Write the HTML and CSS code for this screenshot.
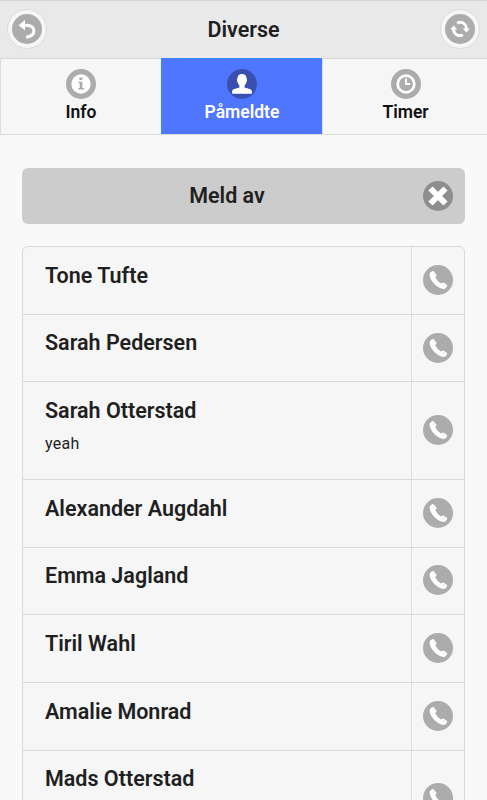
FILE: index.html
```
<!DOCTYPE html>
<html lang="no">
<head>
    <meta charset="UTF-8">
    <meta name="viewport" content="width=device-width, initial-scale=1.0">
    <title>Diverse</title>
    <link rel="stylesheet" href="styles.css">
</head>
<body>
    <svg class="sprite" width="0" height="0">
        <symbol id="phone" viewBox="0 0 30 30">
            <circle cx="15" cy="15" r="15" fill="#acacac"/>
            <path fill="#fff" d="M6.6 9.4Q6.8 8 8 7L9.2 6.2Q10.2 5.6 11 6.6L13.4 9.4Q13.9 10.4 13 11.1L12.2 12.1Q13.8 16 18 18.6L19.4 17.8Q20.2 17.3 21 17.8L23.8 19.8Q24.6 20.4 24 21.4L22.8 23Q21.6 24.3 19.6 23.8Q14 22.2 10 17.4Q6.6 13 6.6 9.4Z"/>
            <path stroke="#acacac" stroke-width="0.4" d="M9.8 9.8L12.4 7.6M19.9 21.2L22.2 18.2"/>
        </symbol>
    </svg>

    <header class="header">
        <a class="round-button">
            <svg width="30" height="30" viewBox="0 0 30 30">
                <circle cx="15" cy="15" r="15" fill="#acacac"/>
                <path fill="#fff" d="M6.6 11.2L13 6V16.2Z"/>
                <path fill="none" stroke="#fff" stroke-width="3" d="M12 11.2Q21.9 10.8 21.9 17Q21.9 22.2 14.2 23.2"/>
            </svg>
        </a>
        <h1>Diverse</h1>
        <a class="round-button">
            <svg width="30" height="30" viewBox="0 0 30 30">
                <circle cx="15" cy="15" r="15" fill="#acacac"/>
                <path fill="none" stroke="#fff" stroke-width="3" d="M12.2 9.4Q14 8 16.4 8.4A6.6 6.6 0 0 1 21.4 15M17.8 20.6Q16 22 13.6 21.6A6.6 6.6 0 0 1 8.6 15"/>
                <path fill="#fff" d="M17.6 14.6H24.8L21.4 18.6ZM5.2 15.4H12.4L8.6 11.4Z"/>
            </svg>
        </a>
    </header>

    <nav class="tabs">
        <a class="tab">
            <svg width="30" height="30" viewBox="0 0 30 30">
                <circle cx="15" cy="15" r="15" fill="#acacac"/>
                <circle cx="15" cy="15" r="9.7" fill="#fff"/>
                <path fill="#acacac" d="M13.4 8.6H16.4V11H13.4ZM12.3 12.7H16.4V19H18V20.4H12.3V19H13.7V14.1H12.3Z"/>
            </svg>
            Info
        </a>
        <a class="tab active">
            <svg width="30" height="30" viewBox="0 0 30 30">
                <circle cx="15" cy="15" r="15" fill="#3a50b1"/>
                <path fill="#fff" d="M15 5C18 5 19.7 7 19.7 9.9Q20.6 10.5 19.5 13Q18.9 15.5 17.6 16.6V18.4C18.4 19.5 24.9 19 24.9 22.4V24.7H5.1V22.4C5.1 19 11.6 19.5 12.4 18.4V16.6Q11.1 15.5 10.5 13Q9.4 10.5 10.3 9.9C10.3 7 12 5 15 5Z"/>
            </svg>
            Påmeldte
        </a>
        <a class="tab">
            <svg width="30" height="30" viewBox="0 0 30 30">
                <circle cx="15" cy="15" r="15" fill="#acacac"/>
                <circle cx="15" cy="15" r="8.3" fill="none" stroke="#fff" stroke-width="2.7"/>
                <path fill="none" stroke="#fff" stroke-width="2" d="M15 9.5V15H19.2"/>
            </svg>
            Timer
        </a>
    </nav>

    <main>
        <button class="unregister">
            <span>Meld av</span>
            <svg width="30" height="30" viewBox="0 0 30 30">
                <circle cx="15" cy="15" r="15" fill="#8e8e8e"/>
                <path stroke="#fff" stroke-width="6" d="M7.5 7.5L22.5 22.5M22.5 7.5L7.5 22.5"/>
            </svg>
        </button>

        <ul class="people">
            <li><div class="person"><h2>Tone Tufte</h2></div><a class="call"><svg width="30" height="30"><use href="#phone"/></svg></a></li>
            <li><div class="person"><h2>Sarah Pedersen</h2></div><a class="call"><svg width="30" height="30"><use href="#phone"/></svg></a></li>
            <li class="tall"><div class="person"><h2>Sarah Otterstad</h2><p>yeah</p></div><a class="call"><svg width="30" height="30"><use href="#phone"/></svg></a></li>
            <li><div class="person"><h2>Alexander Augdahl</h2></div><a class="call"><svg width="30" height="30"><use href="#phone"/></svg></a></li>
            <li><div class="person"><h2>Emma Jagland</h2></div><a class="call"><svg width="30" height="30"><use href="#phone"/></svg></a></li>
            <li><div class="person"><h2>Tiril Wahl</h2></div><a class="call"><svg width="30" height="30"><use href="#phone"/></svg></a></li>
            <li><div class="person"><h2>Amalie Monrad</h2></div><a class="call"><svg width="30" height="30"><use href="#phone"/></svg></a></li>
            <li class="tall"><div class="person"><h2>Mads Otterstad</h2></div><a class="call"><svg width="30" height="30"><use href="#phone"/></svg></a></li>
        </ul>
    </main>
</body>
</html>
```
FILE: styles.css
```
* {
    box-sizing: border-box;
}
body {
    margin: 0;
    height: 800px;
    overflow: hidden;
    background: #f9f9f9;
    color: #1f1f1f;
    font-family: Roboto, sans-serif;
}
.sprite {
    display: block;
}
svg {
    display: block;
    flex: none;
}
h1, h2, p {
    margin: 0;
}
.header {
    display: flex;
    align-items: center;
    justify-content: space-between;
    height: 58px;
    padding: 0 7px 2px;
    background: #e9e9e9;
    border-top: 1px solid #d6d6d6;
}
.header h1 {
    padding-top: 3px;
    font-size: 21.5px;
    font-weight: 600;
    line-height: 28px;
}
.round-button {
    display: flex;
    align-items: center;
    justify-content: center;
    width: 40px;
    height: 40px;
    background: #f6f6f6;
    border: 1px solid #dcdcdc;
    border-radius: 50%;
}
.tabs {
    display: grid;
    grid-template-columns: 161px 161px 1fr;
    height: 77px;
    background: #f6f6f6;
    border-top: 1px solid #d9d9d9;
    border-bottom: 1px solid #d9d9d9;
}
.tab {
    display: flex;
    flex-direction: column;
    align-items: center;
    padding-top: 10px;
    color: #111;
    font-size: 17.5px;
    font-weight: 600;
    line-height: 26px;
    border-left: 1px solid #dcdcdc;
}
.tab:last-child {
    padding-left: 1px;
}
.tab.active {
    margin-top: -1px;
    background: #4f76ff;
    color: #fff;
    border-top: 1px solid #3388ff;
    border-left-color: #3388ff;
}
main {
    padding: 33px 22px 0;
}
.unregister {
    display: flex;
    align-items: center;
    width: 100%;
    height: 56px;
    padding: 0 12px 0 0;
    background: #ccc;
    border: 0;
    border-radius: 6px;
    color: #1f1f1f;
    font-family: inherit;
    font-size: 21.5px;
    font-weight: 600;
}
.unregister span {
    flex: 1;
    padding: 0 0 2px 9px;
}
.people {
    margin: 22px 0 0;
    padding: 0;
    list-style: none;
    background: #f6f6f6;
    border: 1px solid #d9d9d9;
    border-radius: 6px 6px 0 0;
}
.people li {
    display: flex;
    height: 67.7px;
    border-bottom: 1px solid #d9d9d9;
}
.people .tall {
    height: 97.5px;
}
.person {
    flex: 1;
    padding: 14.8px 0 0 22px;
}
.person h2 {
    font-size: 21.5px;
    font-weight: 600;
    line-height: 28px;
}
.person p {
    margin-top: 8px;
    font-size: 16px;
    letter-spacing: 0.3px;
    line-height: 22px;
}
.call {
    display: flex;
    align-items: center;
    justify-content: center;
    width: 53px;
    padding-bottom: 1px;
    border-left: 1px solid #dcdcdc;
}
```
